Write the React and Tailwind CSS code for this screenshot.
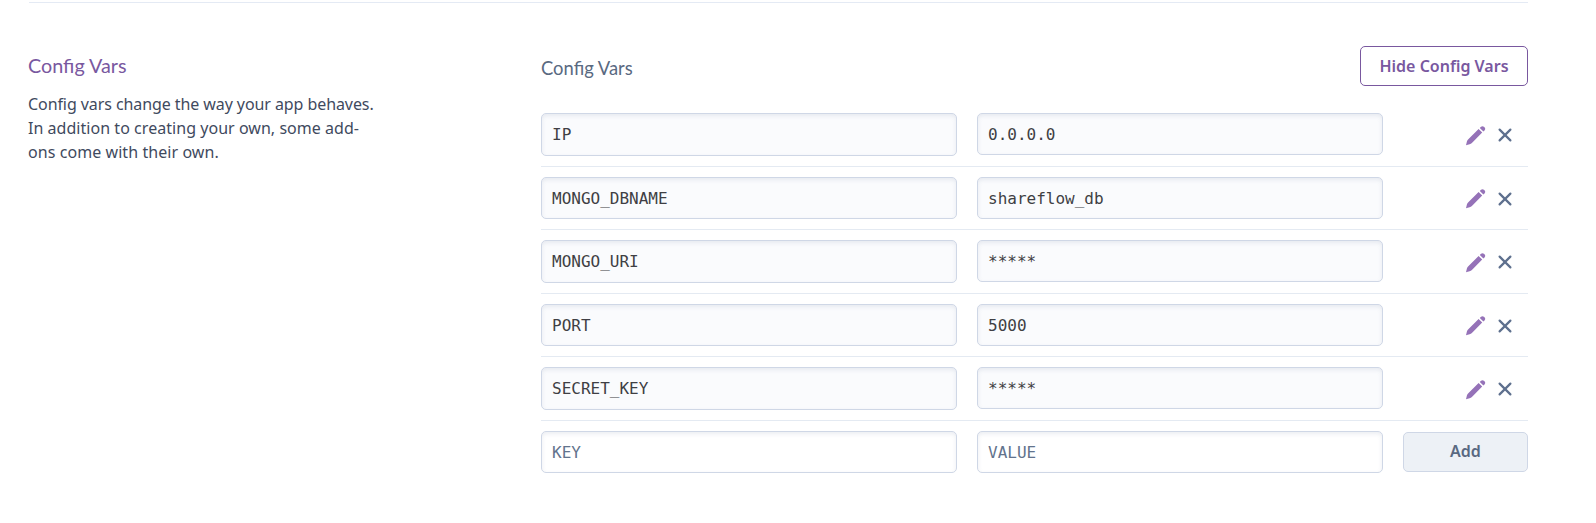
const vars = [
  { name: 'IP', value: '0.0.0.0', row: 'h-16', key: 'h-[43px]', pen: 'mt-[13px]' },
  { name: 'MONGO_DBNAME', value: 'shareflow_db', row: 'h-[63px]', key: 'h-[42px]', pen: 'mt-3' },
  { name: 'MONGO_URI', value: '*****', row: 'h-16', key: 'h-[43px]', pen: 'mt-[13px]' },
  { name: 'PORT', value: '5000', row: 'h-[63px]', key: 'h-[42px]', pen: 'mt-3' },
  { name: 'SECRET_KEY', value: '*****', row: 'h-16', key: 'h-[43px]', pen: 'mt-[13px]' },
];

const field =
  "block rounded-[5px] border border-[#cfd7e6] px-2.5 text-base shadow-[inset_0_2px_4px_rgba(98,113,158,0.13)] outline-none font-['DejaVu_Sans_Mono',monospace] placeholder:text-[#62738d] placeholder:opacity-100";

function Pencil() {
  return (
    <svg width="20" height="20" viewBox="0 0 20 20" fill="#9572b8">
      <path d="M0 19.2 L0.9 15.6 Q1.3 14.3 2.3 13.3 L12.6 3 L16.2 6.6 L5.9 16.9 Q4.9 17.9 3.6 18.3 Z" />
      <path d="M13.8 1.9 L15 0.7 Q16.5 -0.4 17.9 0.7 L18.7 1.5 Q19.8 2.9 18.6 4.3 L17.4 5.4 Z" />
    </svg>
  );
}

function Cross() {
  return (
    <svg width="14" height="14" viewBox="0 0 14 14" fill="none" stroke="#5e708e" strokeWidth="2.2" strokeLinecap="round">
      <path d="M1.6 1.6 L12.4 12.4 M12.4 1.6 L1.6 12.4" />
    </svg>
  );
}

export default function App() {
  return (
    <div className="h-[523px] w-full overflow-hidden bg-white pt-0.5 pl-[29px] text-[#3f4a5e] font-['Noto_Sans',sans-serif]">
      <div className="flex w-[1499px] border-t border-[#e4eaf4]">
        <aside className="w-[512px] pt-12">
          <h2 className="-ml-px font-['Lato',sans-serif] text-[19.8px] leading-7 text-[#79589f]">Config Vars</h2>
          <p className="-ml-px mt-[13px] text-[16px] leading-6 whitespace-nowrap">
            <span className="tracking-[-0.08px]">Config vars change the way your app behaves.</span>
            <br />
            <span className="tracking-[0.04px]">In addition to creating your own, some add-</span>
            <br />
            <span className="tracking-[0.07px]">ons come with their own.</span>
          </p>
        </aside>
        <section className="w-[987px]">
          <div className="flex h-[100px] items-start justify-between">
            <h3 className="pt-[51px] font-['Lato',sans-serif] text-[18.4px] leading-7 text-[#596981]">Config Vars</h3>
            <button className="mt-[43px] h-10 w-[168px] rounded-[5px] border border-[#79589f] text-[16px] font-semibold whitespace-nowrap text-[#79589f]">
              Hide Config Vars
            </button>
          </div>
          {vars.map((v) => (
            <div key={v.name} className={`${v.row} flex gap-5 border-b border-[#e4eaf2] pt-2.5`}>
              <input readOnly defaultValue={v.name} className={`${field} ${v.key} w-[416px] bg-[#fafbfd] text-[#3f3f44]`} />
              <input readOnly defaultValue={v.value} className={`${field} h-[42px] w-[406px] bg-[#fafbfd] text-[#3f3f44]`} />
              <div className="flex w-[125px] items-start justify-end gap-3 pr-4">
                <button className={v.pen}><Pencil /></button>
                <button className="mt-[15px]"><Cross /></button>
              </div>
            </div>
          ))}
          <div className="flex gap-5 pt-2.5">
            <input placeholder="KEY" className={`${field} h-[42px] w-[416px] bg-white`} />
            <input placeholder="VALUE" className={`${field} h-[42px] w-[406px] bg-white`} />
            <button className="mt-px h-10 w-[125px] rounded-[5px] border border-[#cfd7e6] bg-[#edf1f6] pb-0.5 text-[16px] font-semibold text-[#596981]">
              Add
            </button>
          </div>
        </section>
      </div>
    </div>
  );
}
